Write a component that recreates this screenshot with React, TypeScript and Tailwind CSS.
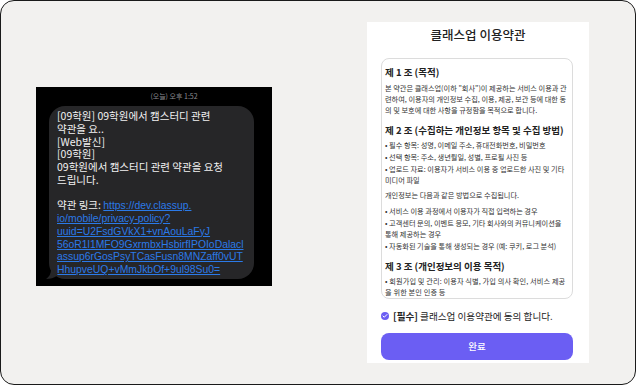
import { Check } from "lucide-react";

const bubbleLines = [
  "[09학원] 09학원에서 캠스터디 관련",
  "약관을 요..",
  "[Web발신]",
  "[09학원]",
  "09학원에서 캠스터디 관련 약관을 요청",
  "드립니다.",
];

const linkLines = [
  "io/mobile/privacy-policy?",
  "uuid=U2FsdGVkX1+vnAouLaFyJ",
  "56oR1l1MFO9GxrmbxHsbirfIPOIoDalacl",
  "assup6rGosPsyTCasFusn8MNZaff0vUT",
  "HhupveUQ+vMmJkbOf+9ul98Su0=",
];

function MessageShot() {
  return (
    <div className="flex h-[199px] w-[236px] flex-col bg-black">
      <div className="pl-[40px] pt-[4px] text-center text-[7px] leading-[10px] text-[#8e8e93]">
        (오늘) 오후 1:52
      </div>
      <div className="relative ml-[13px] mt-[5px] h-[173px] w-[205px] rounded-[16px] bg-[#262628] px-[8px] pt-[4px] text-[10.5px] leading-[12.75px] text-[#f1f1f1]">
        {bubbleLines.map((line) => (
          <div key={line} className="whitespace-nowrap">
            {line}
          </div>
        ))}
        <div className="h-[12.75px]" />
        <div className="whitespace-nowrap">
          약관 링크:{" "}
          <span className="font-['Liberation_Sans',sans-serif] text-[10.4px] text-[#2b7ae8] underline">
            https://dev.classup.
          </span>
        </div>
        {linkLines.map((line) => (
          <div
            key={line}
            className="whitespace-nowrap font-['Liberation_Sans',sans-serif] text-[10.4px] text-[#2b7ae8] underline"
          >
            {line}
          </div>
        ))}
        <svg
          className="absolute bottom-0 left-[-3px]"
          width="12"
          height="10"
          viewBox="0 0 12 10"
        >
          <path d="M5 0 C5 5 3 8 0 10 C4 10 8 9 12 6 Z" fill="#262628" />
        </svg>
      </div>
    </div>
  );
}

function Heading({ children, first }: { children: React.ReactNode; first?: boolean }) {
  return (
    <h3 className={`${first ? "" : "mt-[7px]"} text-[9.5px] font-bold leading-[14px] text-[#222]`}>
      {children}
    </h3>
  );
}

function Bullets({ items, className = "" }: { items: string[]; className?: string }) {
  return (
    <ul className={className}>
      {items.map((item, i) => (
        <li key={item} className={i === 0 ? "" : "mt-[1px]"}>
          {`• ${item}`}
        </li>
      ))}
    </ul>
  );
}

function TermsPanel() {
  return (
    <div className="flex h-[341px] w-[222px] flex-col bg-white px-[14px]">
      <h2 className="pt-[4px] text-center text-[12.5px] font-medium leading-[18px] text-[#222]">
        클래스업 이용약관
      </h2>
      <div className="mt-[14px] h-[241px] w-[192px] overflow-hidden rounded-[8px] border border-[#dcdcdc] px-[3px] pt-[6px] text-[7.2px] leading-[11px] text-[#333]">
        <Heading first>제 1 조 (목적)</Heading>
        <p className="mt-[4px]">
          본 약관은 클래스업(이하 "회사")이 제공하는 서비스 이용과 관련하여, 이용자의 개인정보 수집,
          이용, 제공, 보관 등에 대한 동의 및 보호에 대한 사항을 규정함을 목적으로 합니다.
        </p>
        <Heading>제 2 조 (수집하는 개인정보 항목 및 수집 방법)</Heading>
        <Bullets
          className="mt-[3px]"
          items={[
            "필수 항목: 성명, 이메일 주소, 휴대전화번호, 비밀번호",
            "선택 항목: 주소, 생년월일, 성별, 프로필 사진 등",
            "업로드 자료: 이용자가 서비스 이용 중 업로드한 사진 및 기타 미디어 파일",
          ]}
        />
        <p className="mt-[4px]">개인정보는 다음과 같은 방법으로 수집됩니다.</p>
        <Bullets
          className="mt-[5px]"
          items={[
            "서비스 이용 과정에서 이용자가 직접 입력하는 경우",
            "고객센터 문의, 이벤트 응모, 기타 회사와의 커뮤니케이션을 통해 제공하는 경우",
            "자동화된 기술을 통해 생성되는 경우 (예: 쿠키, 로그 분석)",
          ]}
        />
        <Heading>제 3 조 (개인정보의 이용 목적)</Heading>
        <Bullets
          className="mt-[3px] tracking-[0.1px]"
          items={["회원가입 및 관리: 이용자 식별, 가입 의사 확인, 서비스 제공을 위한 본인 인증 등"]}
        />
      </div>
      <label className="mt-[10px] flex h-[14px] items-center gap-[4px] text-[9.6px] text-[#222]">
        <span className="flex h-[8px] w-[8px] items-center justify-center rounded-full bg-[#6b5ef3]">
          <Check className="h-[6px] w-[6px] text-white" strokeWidth={4} />
        </span>
        <span>
          <b className="font-bold">[필수]</b> 클래스업 이용약관에 동의 합니다.
        </span>
      </label>
      <button className="mt-[10px] h-[27px] w-[192px] rounded-[8px] bg-[#6b5ef3] text-[9.5px] font-medium text-white">
        완료
      </button>
    </div>
  );
}

export default function App() {
  return (
    <div className="flex h-[385px] w-[636px] items-start rounded-[14px] border border-[#1a1a1a] bg-[#f2f1ef] font-['Noto_Sans_CJK_KR',sans-serif]">
      <div className="ml-[35px] mt-[86px]">
        <MessageShot />
      </div>
      <div className="ml-[95px] mt-[21px]">
        <TermsPanel />
      </div>
    </div>
  );
}
